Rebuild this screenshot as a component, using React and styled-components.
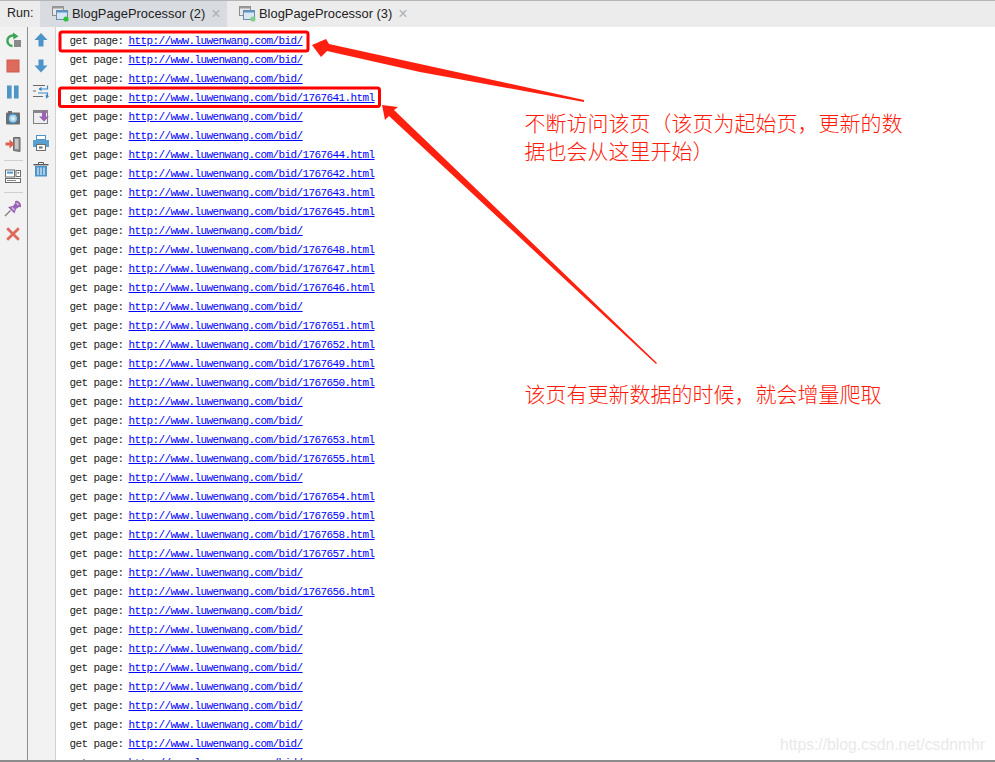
import styled, { createGlobalStyle } from "styled-components";

const GlobalStyle = createGlobalStyle`
  html, body {
    margin: 0;
    padding: 0;
    background: #fff;
  }
`;

const Root = styled.div`
  position: relative;
  width: 995px;
  height: 762px;
  box-sizing: border-box;
  display: flex;
  flex-direction: column;
  overflow: hidden;
  border-top: 1px solid #b4b4b4;
  border-bottom: 2px solid #8c8c8c;
  font-family: "Liberation Sans", Arial, sans-serif;
`;

const TabBar = styled.div`
  height: 26px;
  flex: none;
  display: flex;
  align-items: stretch;
  background: #ececec;
`;

const RunLabel = styled.div`
  width: 40px;
  box-sizing: border-box;
  padding: 5px 0 0 7px;
  font-size: 12.5px;
  color: #222;
`;

const Tab = styled.div`
  display: flex;
  align-items: center;
  width: 187px;
  box-sizing: border-box;
  padding: 0 0 2px 12px;
  gap: 3px;
  background: ${(p) => (p.$active ? "#d8dce0" : "#ececec")};
  font-size: 12.9px;
  color: #222;
`;

const TabClose = styled.span`
  margin-left: 3px;
  padding-top: 2px;
  color: #aab0b4;
  font-size: 16px;
  line-height: 1;
`;

const Body = styled.div`
  flex: 1;
  min-height: 0;
  display: flex;
`;

const Toolbar = styled.div`
  width: 27px;
  flex: none;
  display: flex;
  flex-direction: column;
  background: #f2f2f2;
  border-right: ${(p) => (p.$strong ? "1px solid #8e8e8e" : "1px solid #d2d2d2")};
`;

const ToolButton = styled.div`
  height: ${(p) => (p.$tight ? "25.8px" : "26px")};
  flex: none;
  display: flex;
  align-items: center;
  justify-content: center;
  padding-right: 1px;
  box-sizing: border-box;
`;

const Separator = styled.div`
  height: 1px;
  margin: 3px 4px 2px;
  background: #cfcfcf;
`;

const Console = styled.div`
  flex: 1;
  min-width: 0;
  padding: 5px 0 0 13.5px;
  background: #fff;
  overflow: hidden;
  font-family: "Liberation Mono", "DejaVu Sans Mono", monospace;
  font-size: 11px;
  letter-spacing: -0.6px;
  color: #1c1c1c;
`;

const Row = styled.div`
  height: 19px;
  line-height: 19px;
  white-space: pre;
`;

const PageLink = styled.a`
  margin-left: -1px;
  color: #0000ff;
  text-decoration: underline;
`;

const Overlay = styled.svg`
  position: absolute;
  left: 0;
  top: -1px;
  width: 995px;
  height: 762px;
  pointer-events: none;
`;

const Note = styled.div`
  position: absolute;
  left: 524.5px;
  top: ${(p) => p.$top}px;
  width: 390px;
  font-family: "Noto Sans CJK SC", "Liberation Sans", sans-serif;
  font-size: 21px;
  font-weight: 300;
  line-height: 28px;
  color: #ff1a0a;
`;

const Watermark = styled.div`
  position: absolute;
  left: 780px;
  top: 734px;
  font-size: 15.7px;
  line-height: 20px;
  color: #e9e9e9;
  white-space: nowrap;
`;

const Icon = ({ children, size = 18 }) => (
  <svg width={size} height={size} viewBox="0 0 18 18">
    {children}
  </svg>
);

const RunTabIcon = ({ dim }) => (
  <svg width="17" height="17" viewBox="0 0 17 17" style={{ flex: "none" }}>
    <rect x="0.5" y="1.5" width="11" height="9" fill="#e8e8e8" stroke="#8c8c8c" />
    <rect x="0.5" y="1.5" width="11" height="2" fill="#9a9a9a" />
    <rect x="4.5" y="5.5" width="11" height="9" fill="#d6e6f4" stroke="#6e8ca6" />
    <rect x="4.5" y="5.5" width="11" height="2" fill="#5b93c4" />
    <circle cx="14" cy="14" r="2.6" fill={dim ? "#7fd08a" : "#2fc23e"} />
  </svg>
);

const leftIcons = [
  // rerun
  <Icon key="rerun">
    <path d="M8.5 15a5.2 5.2 0 1 1 3-9.5" fill="none" stroke="#3aa655" strokeWidth="2.4" />
    <path d="M9 1.5l5.5 3.7L9.4 8.5z" fill="#3aa655" />
    <rect x="10" y="9" width="7" height="7" fill="#8a8a8a" />
  </Icon>,
  // stop
  <Icon key="stop">
    <rect x="3" y="3" width="12" height="12" fill="#de6a5c" stroke="#cc5b4e" />
  </Icon>,
  // pause
  <Icon key="pause">
    <rect x="3" y="2.5" width="4.6" height="13" fill="#4d94c8" />
    <rect x="10" y="2.5" width="4.6" height="13" fill="#4d94c8" />
  </Icon>,
  // camera
  <Icon key="camera">
    <rect x="2" y="3.5" width="14" height="12" rx="1" fill="#6e6e6e" />
    <rect x="4" y="2" width="4" height="2" fill="#6e6e6e" />
    <circle cx="9" cy="9.5" r="4.6" fill="#a8cfe8" stroke="#3f82b4" strokeWidth="1.4" />
    <circle cx="9" cy="9.5" r="2" fill="#dcecf6" />
  </Icon>,
  // exit
  <Icon key="exit">
    <path d="M9.5 2.5h6.5v14l-6.5-1z" fill="#8d8d8d" stroke="#6a6a6a" />
    <path d="M11 4h3.5v10H11z" fill="#c6c6c6" />
    <path d="M1.5 7.5h4V4.5l5 4.5-5 4.5v-3h-4z" fill="#dd6055" />
  </Icon>,
  "sep",
  // layout
  <Icon key="layout">
    <rect x="1.5" y="3" width="9" height="7" fill="#fff" stroke="#6d6d6d" />
    <rect x="3" y="4.6" width="6" height="2" fill="#4d94c8" />
    <rect x="12" y="3.5" width="4.5" height="6" fill="#fff" stroke="#6d6d6d" />
    <rect x="13.6" y="5" width="1.6" height="1.6" fill="#777" />
    <rect x="1.5" y="11.5" width="15" height="4" fill="#fff" stroke="#6d6d6d" />
    <rect x="3" y="13" width="9" height="1" fill="#8a8a8a" />
  </Icon>,
  "sep",
  // pin
  <Icon key="pin">
    <path d="M1 17l5.5-5.5" stroke="#7d7d7d" strokeWidth="1.3" />
    <path d="M4 8l6.5 6.5 1.5-4.5 3-2 1.5.3c1-1 .8-3-.7-4.8S12 1.300 11 2.300l.2 1.700L9 7z" fill="#9a62b4" />
    <path d="M8 8.5l2.500 2.500M12.500 4l2 2" stroke="#dcc2e8" strokeWidth="1.4" />
  </Icon>,
  // close
  <Icon key="close">
    <path d="M3.2 3.2l11.6 11.6M14.8 3.2L3.2 14.8" stroke="#df6a5e" strokeWidth="2.8" />
  </Icon>,
];

const rightIcons = [
  // up
  <Icon key="up">
    <path d="M9 2l6.5 7H11.5v6.5h-5V9H2.5z" fill="#4d94c8" />
  </Icon>,
  // down
  <Icon key="down">
    <path d="M9 15.5l6.5-7H11.5V2.5h-5v6H2.5z" fill="#4d94c8" />
  </Icon>,
  // wrap / swap
  <Icon key="swap">
    <path d="M1 3.5h12M1 14.5h10M1 9h3" stroke="#6a6a6a" strokeWidth="1.2" />
    <path d="M15.5 3.5v3.5H7" fill="none" stroke="#3d88c0" strokeWidth="1.2" />
    <path d="M9.5 4.8L6.5 7l3 2.2z" fill="#3d88c0" />
    <path d="M6 11h9.5v3h-2" fill="none" stroke="#3d88c0" strokeWidth="1.2" />
    <path d="M14 12.5l3 2-3 2.2z" fill="#3d88c0" />
  </Icon>,
  // import
  <Icon key="import">
    <rect x="1.5" y="2.5" width="14" height="13" fill="#efefef" stroke="#808080" />
    <rect x="1.5" y="2.5" width="14" height="2.5" fill="#8a8a8a" />
    <path d="M10 3h4v5.5h3l-5 5-5-5h3z" fill="#9a62b4" />
  </Icon>,
  // print
  <Icon key="print">
    <rect x="4.5" y="1.5" width="9" height="4" fill="#fff" stroke="#4d94c8" />
    <path d="M1 6h16v7h-3v-3H4v3H1z" fill="#5a9fd0" />
    <rect x="4.5" y="10.5" width="9" height="6" fill="#fff" stroke="#6d6d6d" />
    <rect x="7" y="12.5" width="3.5" height="2" fill="#6d6d6d" />
  </Icon>,
  // trash
  <Icon key="trash">
    <rect x="1.5" y="4" width="15" height="1.4" fill="#5a5a5a" />
    <path d="M6.5 4V2.5h5V4" fill="none" stroke="#5a5a5a" />
    <path d="M3 6h12v10.5H3z" fill="#4d94c8" />
    <path d="M6 7.5v7.5M9 7.5v7.5M12 7.5v7.5" stroke="#e6f0f7" strokeWidth="1.2" />
  </Icon>,
];

const pages = [
  "", "", "", "1767641.html", "", "", "1767644.html", "1767642.html", "1767643.html",
  "1767645.html", "", "1767648.html", "1767647.html", "1767646.html", "", "1767651.html",
  "1767652.html", "1767649.html", "1767650.html", "", "", "1767653.html", "1767655.html",
  "", "1767654.html", "1767659.html", "1767658.html", "1767657.html", "", "1767656.html",
  "", "", "", "", "", "", "", "", "",
];

const ToolColumn = ({ icons, strong, tight }) => (
  <Toolbar $strong={strong}>
    {icons.map((icon, i) =>
      icon === "sep" ? (
        <Separator key={i} />
      ) : (
        <ToolButton key={i} $tight={tight}>
          {icon}
        </ToolButton>
      )
    )}
  </Toolbar>
);

export default function App() {
  return (
    <Root>
      <GlobalStyle />
      <TabBar>
        <RunLabel>Run:</RunLabel>
        <Tab $active>
          <RunTabIcon />
          BlogPageProcessor (2)
          <TabClose>×</TabClose>
        </Tab>
        <Tab>
          <RunTabIcon dim />
          BlogPageProcessor (3)
          <TabClose>×</TabClose>
        </Tab>
      </TabBar>
      <Body>
        <ToolColumn icons={leftIcons} strong />
        <ToolColumn icons={rightIcons} tight />
        <Console>
          {pages.map((page, i) => (
            <Row key={i}>
              {"get page: "}
              <PageLink>{`http://www.luwenwang.com/bid/${page}`}</PageLink>
            </Row>
          ))}
        </Console>
      </Body>

      <Overlay viewBox="0 0 995 762">
        <rect x="60" y="32" width="248" height="19" rx="2" fill="none" stroke="#ff0000" strokeWidth="3" />
        <rect x="59.5" y="88" width="320" height="18.5" rx="2" fill="none" stroke="#ff0000" strokeWidth="3" />
        <polygon points="312,45 326,39 329,44 584,100 584,102 420,72 327,51 321,57" fill="#ff2010" />
        <polygon points="382,105 398,107 394,110 657,363 656,364 389,116 385,120" fill="#ff2010" />
      </Overlay>
      <Note $top={107}>不断访问该页（该页为起始页，更新的数据也会从这里开始）</Note>
      <Note $top={378}>该页有更新数据的时候，就会增量爬取</Note>
      <Watermark>https://blog.csdn.net/csdnmhr</Watermark>
    </Root>
  );
}
